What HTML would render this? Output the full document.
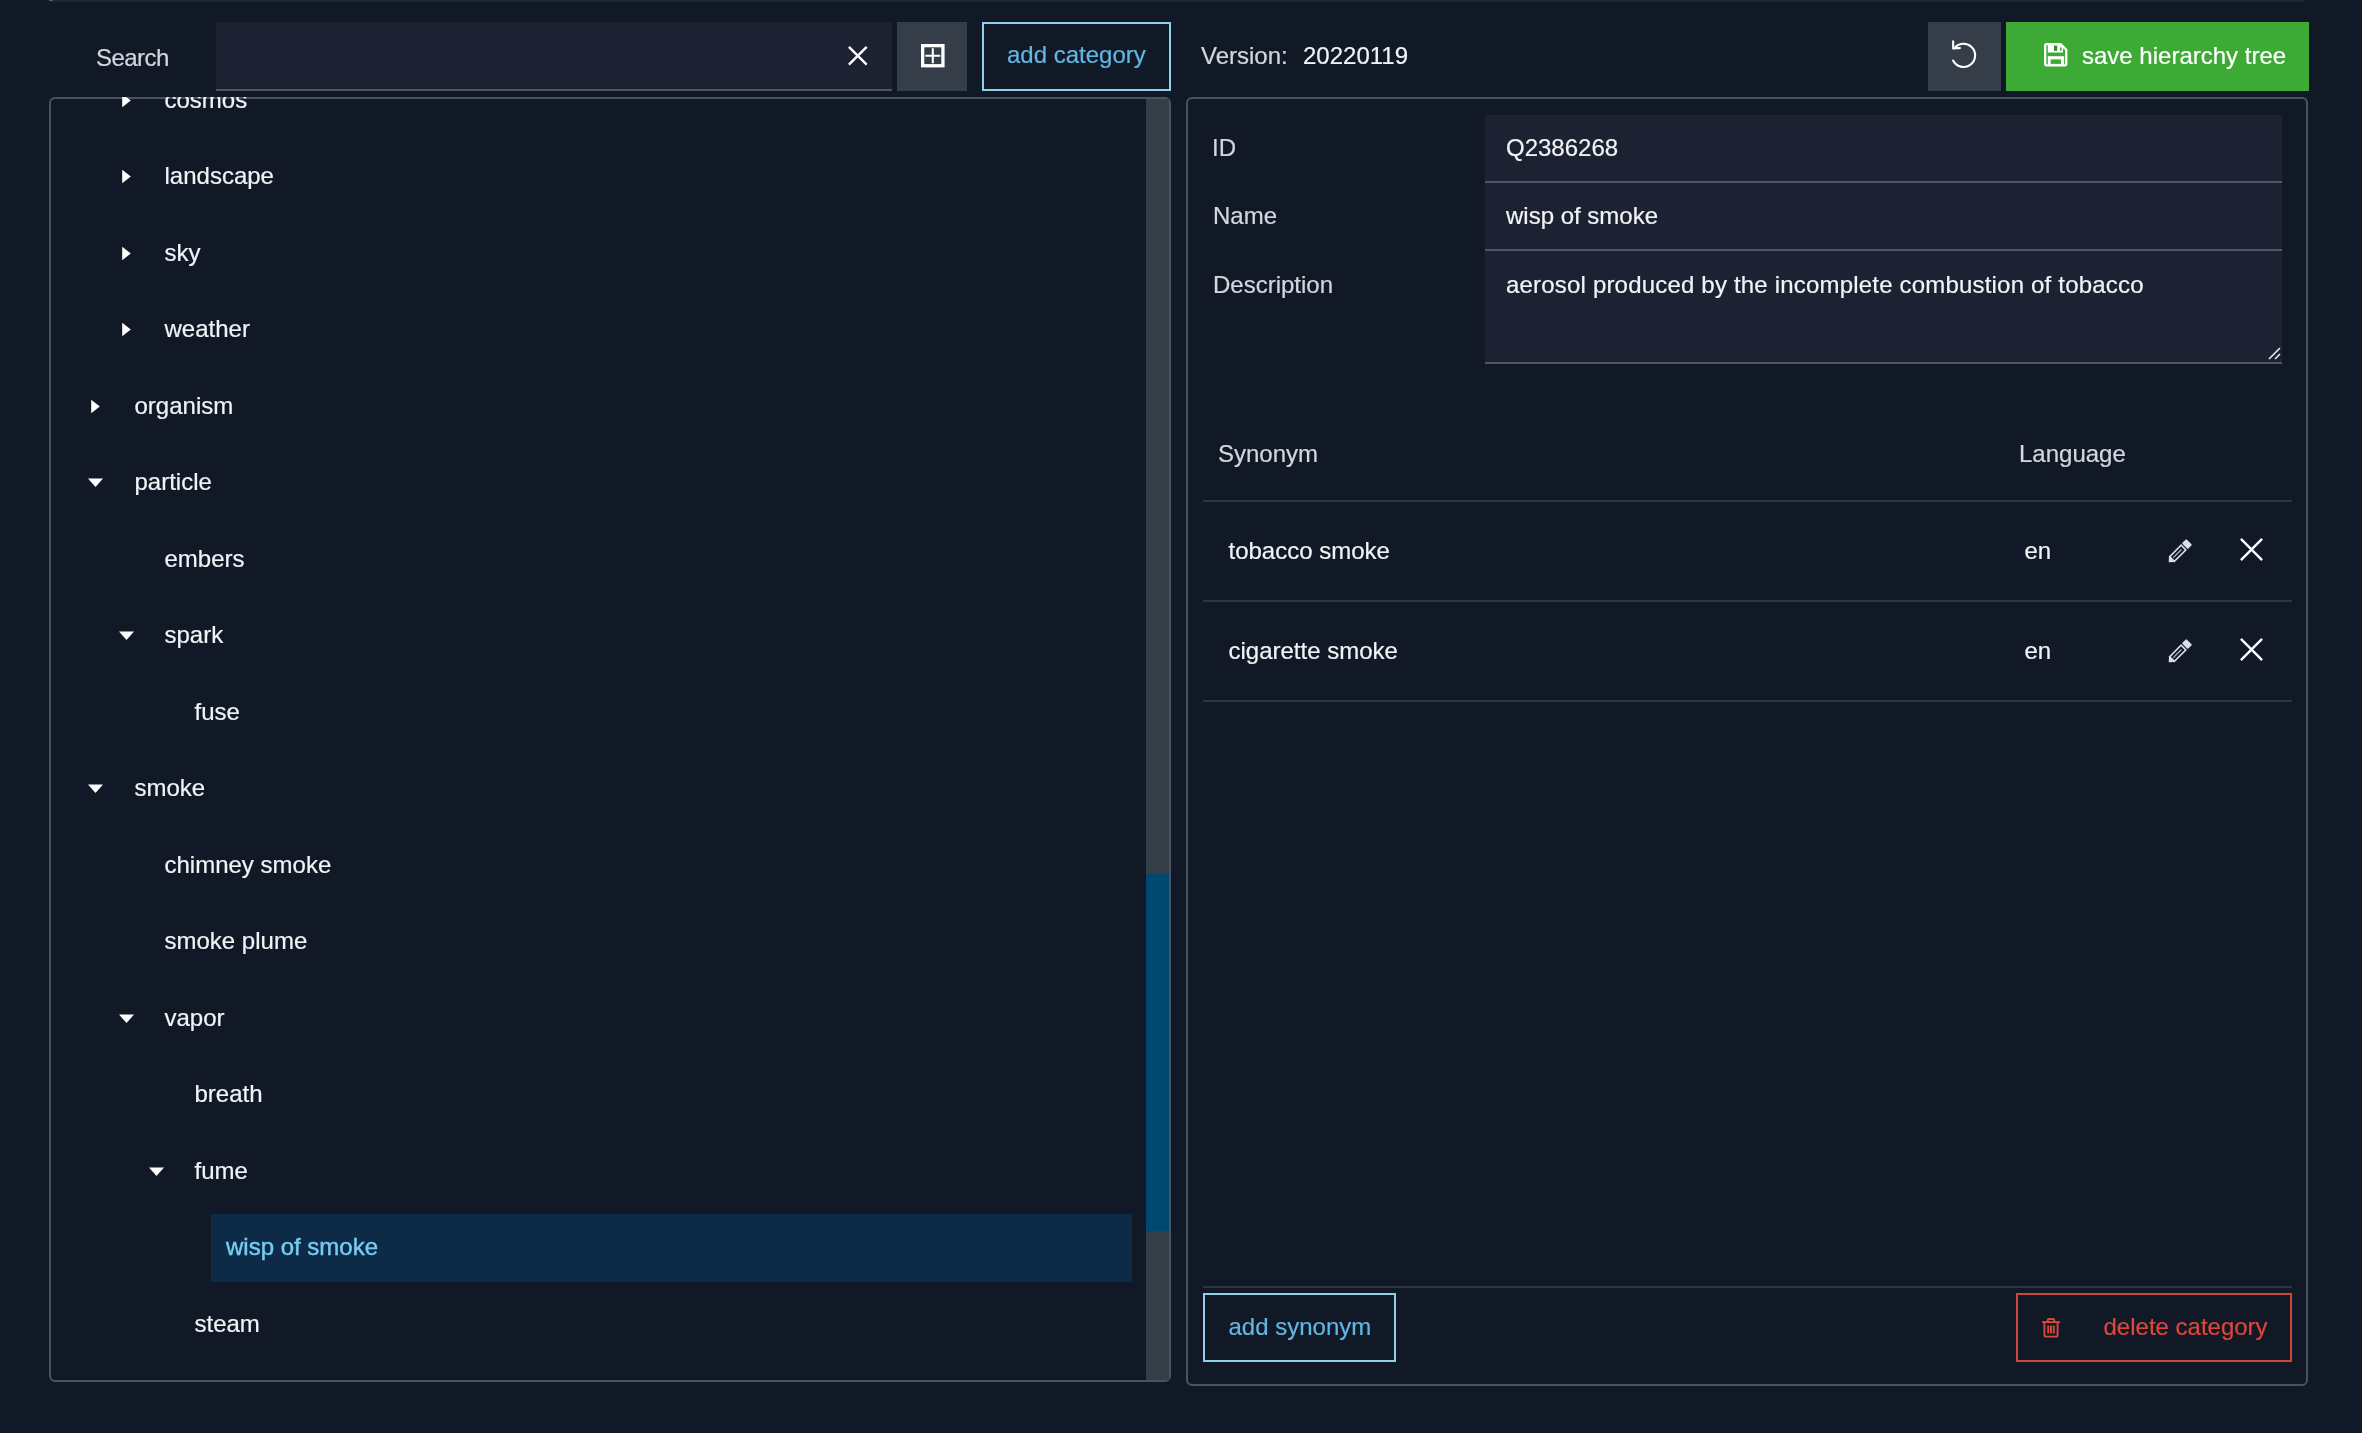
<!DOCTYPE html>
<html lang="en">
<head>
<meta charset="utf-8">
<title>Hierarchy tree editor</title>
<style>
html,body{margin:0;padding:0;}
html{background:#111826;}
body{will-change:transform;width:2362px;height:1433px;overflow:hidden;background:#111826;color:#f1f3f6;
 font-family:"Liberation Sans",sans-serif;font-size:24px;position:relative;}
.abs{position:absolute;}
.t{position:absolute;line-height:28px;font-size:24px;white-space:nowrap;-webkit-text-stroke:.2px currentColor;}
.dim{color:#d3d7de;}
.topline{left:50px;top:0;width:2254px;height:2px;background:#1c2331;}
.input{position:absolute;background:#1c2231;border-bottom:2px solid #4d5666;box-sizing:border-box;}
.btn{position:absolute;box-sizing:border-box;}
.btn.gray{background:#343d48;}
.btn.green{background:#3eaa36;}
.btn.blue{border:2px solid #90ceec;}
.btn.red{border:2px solid #d5443a;}
.cblue{color:#62b6e2;}
.cred{color:#dc473b;}
.panel{position:absolute;box-sizing:border-box;border:2px solid #4a5363;border-radius:6px;}
svg{position:absolute;overflow:visible;}
.hl{position:absolute;width:921px;height:68px;background:#0d2a47;}
.sel{color:#74cbf3;-webkit-text-stroke:.45px currentColor;}
.hr{position:absolute;height:2px;background:#2c3544;}
</style>
</head>
<body>
<div class="abs topline"></div>
<div class="abs" style="left:49px;top:0;width:4px;height:1px;background:#535b6b;"></div>
<!-- toolbar -->
<div class="t dim" style="left:96px;top:43.6px;letter-spacing:-.55px;">Search</div>
<div class="input" style="left:216px;top:22px;width:676px;height:69px;"></div>
<svg style="left:848px;top:46.2px;" width="19.6" height="19.6" viewBox="0 0 19.6 19.6"><path d="M0.9 0.9 L18.7 18.7 M18.7 0.9 L0.9 18.7" stroke="#fff" stroke-width="2.4" fill="none"/></svg>
<div class="btn gray" style="left:897px;top:22px;width:70px;height:69px;"></div>
<svg style="left:921px;top:44.2px;" width="23.6" height="23.4" viewBox="0 0 23.6 23.4"><rect x="1.65" y="1.65" width="20.3" height="20.1" fill="none" stroke="#fff" stroke-width="3.3"/><path d="M11.8 4.2 V19.2 M4.3 11.7 H19.3" stroke="#fff" stroke-width="2.1" fill="none"/></svg>
<div class="btn blue" style="left:982px;top:22px;width:189px;height:69px;"></div>
<div class="t cblue" style="left:1007px;top:41.4px;">add category</div>
<div class="t dim" style="left:1201px;top:41.6px;">Version:</div>
<div class="t" style="left:1303px;top:41.6px;">20220119</div>
<div class="btn gray" style="left:1928px;top:22px;width:73px;height:69px;"></div>
<svg style="left:1950px;top:38px;" width="30" height="32" viewBox="0 0 30 32"><path d="M4.14 10.55 A11.6 11.6 0 1 1 3.1 22.5" fill="none" stroke="#fff" stroke-width="2.1" stroke-linecap="round"/><path d="M3.15 3.3 V10.1 H9.9" fill="none" stroke="#fff" stroke-width="2.1" stroke-linecap="round" stroke-linejoin="miter"/></svg>
<div class="btn green" style="left:2006px;top:22px;width:303px;height:69px;"></div>
<svg style="left:2044px;top:42.5px;" width="23.4" height="23.5" viewBox="0 0 23.4 23.5"><path d="M1.15 2.7 Q1.15 1.15 2.7 1.15 H16.6 L22.25 6.8 V20.8 Q22.25 22.35 20.7 22.35 H2.7 Q1.15 22.35 1.15 20.8 Z" fill="none" stroke="#fff" stroke-width="2.3" stroke-linejoin="round"/><path d="M3.8 2 H16.6 L19 4.4 V9.6 H3.8 Z" fill="#fff"/><rect x="10" y="2.6" width="3.2" height="5.3" fill="#2f8f2c"/><rect x="16" y="4.4" width="1.6" height="3.4" fill="#3eaa36"/><rect x="3.8" y="13.2" width="16.3" height="8.6" fill="#fff"/><rect x="6.7" y="16.4" width="10.3" height="4.5" fill="#3eaa36"/></svg>
<div class="t" style="left:2082px;top:41.5px;color:#fff;">save hierarchy tree</div>
<!-- left panel -->
<div class="panel" id="lp" style="left:49px;top:97px;width:1122px;height:1285px;"></div>
<div class="abs" id="lpclip" style="left:49px;top:97px;width:1122px;height:1285px;overflow:hidden;border-radius:6px;">
<svg style="left:72.8px;top:-4.1px;" width="9" height="15" viewBox="0 0 9 15"><path d="M0.2 0.7 L8.8 7.5 L0.2 14.3 Z" fill="#fff"/></svg>
<div class="t" style="left:115.5px;top:-11.1px;">cosmos</div>
<svg style="left:72.8px;top:72.4px;" width="9" height="15" viewBox="0 0 9 15"><path d="M0.2 0.7 L8.8 7.5 L0.2 14.3 Z" fill="#fff"/></svg>
<div class="t" style="left:115.5px;top:65.4px;">landscape</div>
<svg style="left:72.8px;top:148.9px;" width="9" height="15" viewBox="0 0 9 15"><path d="M0.2 0.7 L8.8 7.5 L0.2 14.3 Z" fill="#fff"/></svg>
<div class="t" style="left:115.5px;top:141.9px;">sky</div>
<svg style="left:72.8px;top:225.4px;" width="9" height="15" viewBox="0 0 9 15"><path d="M0.2 0.7 L8.8 7.5 L0.2 14.3 Z" fill="#fff"/></svg>
<div class="t" style="left:115.5px;top:218.4px;">weather</div>
<svg style="left:42px;top:301.9px;" width="9" height="15" viewBox="0 0 9 15"><path d="M0.2 0.7 L8.8 7.5 L0.2 14.3 Z" fill="#fff"/></svg>
<div class="t" style="left:85.5px;top:294.9px;">organism</div>
<svg style="left:38px;top:381.4px;" width="17" height="9" viewBox="0 0 17 9"><path d="M1 0.6 L16 0.6 L8.5 8.9 Z" fill="#fff"/></svg>
<div class="t" style="left:85.5px;top:371.4px;">particle</div>
<div class="t" style="left:115.5px;top:447.9px;">embers</div>
<svg style="left:68.8px;top:534.4px;" width="17" height="9" viewBox="0 0 17 9"><path d="M1 0.6 L16 0.6 L8.5 8.9 Z" fill="#fff"/></svg>
<div class="t" style="left:115.5px;top:524.4px;">spark</div>
<div class="t" style="left:145.5px;top:600.9px;">fuse</div>
<svg style="left:38px;top:687.4px;" width="17" height="9" viewBox="0 0 17 9"><path d="M1 0.6 L16 0.6 L8.5 8.9 Z" fill="#fff"/></svg>
<div class="t" style="left:85.5px;top:677.4px;">smoke</div>
<div class="t" style="left:115.5px;top:753.9px;">chimney smoke</div>
<div class="t" style="left:115.5px;top:830.4px;">smoke plume</div>
<svg style="left:68.8px;top:916.9px;" width="17" height="9" viewBox="0 0 17 9"><path d="M1 0.6 L16 0.6 L8.5 8.9 Z" fill="#fff"/></svg>
<div class="t" style="left:115.5px;top:906.9px;">vapor</div>
<div class="t" style="left:145.5px;top:983.4px;">breath</div>
<svg style="left:99.1px;top:1069.9px;" width="17" height="9" viewBox="0 0 17 9"><path d="M1 0.6 L16 0.6 L8.5 8.9 Z" fill="#fff"/></svg>
<div class="t" style="left:145.5px;top:1059.9px;">fume</div>
<div class="hl" style="left:162px;top:1117px;"></div>
<div class="t sel" style="left:177px;top:1136.4px;">wisp of smoke</div>
<div class="t" style="left:145.5px;top:1212.9px;">steam</div>
<div class="abs" style="left:1097px;top:2px;width:23px;height:1281px;background:#343e46;"></div>
<div class="abs" style="left:1097px;top:776.5px;width:23px;height:357px;background:#00486f;"></div>
</div>
<!-- right panel -->
<div class="panel" id="rp" style="left:1186px;top:97px;width:1122px;height:1289px;"></div>
<div class="t dim" style="left:1212px;top:133.7px;">ID</div>
<div class="t dim" style="left:1213px;top:202.3px;">Name</div>
<div class="t dim" style="left:1213px;top:270.9px;">Description</div>
<div class="input" style="left:1485px;top:115px;width:797px;height:68px;"></div>
<div class="input" style="left:1485px;top:183px;width:797px;height:68px;"></div>
<div class="input" style="left:1485px;top:251px;width:797px;height:113px;"></div>
<div class="t" style="left:1506px;top:133.7px;">Q2386268</div>
<div class="t" style="left:1506px;top:202.3px;">wisp of smoke</div>
<div class="t" style="left:1506px;top:270.9px;letter-spacing:.19px;">aerosol produced by the incomplete combustion of tobacco</div>
<svg style="left:2267px;top:346px;" width="14" height="14" viewBox="0 0 14 14"><path d="M2 13 L13 2 M8 13 L13 8" stroke="#e8eaee" stroke-width="1.6" fill="none"/></svg>
<div class="t dim" style="left:1218px;top:440.2px;">Synonym</div>
<div class="t dim" style="left:2019px;top:440.2px;">Language</div>
<div class="hr" style="left:1203px;top:500px;width:1089px;"></div>
<div class="hr" style="left:1203px;top:599.5px;width:1089px;"></div>
<div class="hr" style="left:1203px;top:700px;width:1089px;"></div>
<div class="t" style="left:1228.5px;top:536.7px;">tobacco smoke</div>
<div class="t" style="left:2024.5px;top:536.7px;">en</div>
<svg style="left:2179.4px;top:551.9px;" width="1" height="1" viewBox="0 0 1 1"><g transform="rotate(45)"><rect x="-4.1" y="-14.4" width="8.2" height="6.2" rx="1" fill="#d9dee8"/><rect x="-3.3" y="-6.3" width="6.6" height="16.2" fill="none" stroke="#d9dee8" stroke-width="1.6"/><path d="M0 -3.5 V8" stroke="#aeb5c4" stroke-width="1.3" fill="none"/><path d="M-4.1 9.9 H4.1 L0 14.6 Z" fill="#d9dee8"/></g></svg>
<svg style="left:2240px;top:538px;" width="23" height="23" viewBox="0 0 23 23"><path d="M0.9 0.9 L22.1 22.1 M22.1 0.9 L0.9 22.1" stroke="#fff" stroke-width="2.4" fill="none"/></svg>
<div class="t" style="left:1228.5px;top:636.7px;">cigarette smoke</div>
<div class="t" style="left:2024.5px;top:636.7px;">en</div>
<svg style="left:2179.4px;top:651.9px;" width="1" height="1" viewBox="0 0 1 1"><g transform="rotate(45)"><rect x="-4.1" y="-14.4" width="8.2" height="6.2" rx="1" fill="#d9dee8"/><rect x="-3.3" y="-6.3" width="6.6" height="16.2" fill="none" stroke="#d9dee8" stroke-width="1.6"/><path d="M0 -3.5 V8" stroke="#aeb5c4" stroke-width="1.3" fill="none"/><path d="M-4.1 9.9 H4.1 L0 14.6 Z" fill="#d9dee8"/></g></svg>
<svg style="left:2240px;top:638px;" width="23" height="23" viewBox="0 0 23 23"><path d="M0.9 0.9 L22.1 22.1 M22.1 0.9 L0.9 22.1" stroke="#fff" stroke-width="2.4" fill="none"/></svg>
<div class="hr" style="left:1203px;top:1285.5px;width:1089px;"></div>
<div class="btn blue" style="left:1203px;top:1293px;width:193px;height:69px;"></div>
<div class="t cblue" style="left:1228.5px;top:1312.7px;">add synonym</div>
<div class="btn red" style="left:2016px;top:1293px;width:276px;height:69px;"></div>
<svg style="left:2041.5px;top:1317.5px;" width="18" height="20" viewBox="0 0 18 20"><g fill="none" stroke="#dc473b" stroke-width="1.9" stroke-linecap="butt" stroke-linejoin="round"><path d="M0 4.1 H18"/><path d="M5.8 4 V2 a1 1 0 0 1 1-1 H11.2 a1 1 0 0 1 1 1 V4"/><path d="M2.4 4.4 V17 a1.6 1.6 0 0 0 1.6 1.6 H14 a1.6 1.6 0 0 0 1.6-1.6 V4.4"/><path d="M6.2 7.6 V15.6 M9 7.6 V15.6 M11.8 7.6 V15.6"/></g></svg>
<div class="t cred" style="left:2103.5px;top:1313.3px;">delete category</div>
</body>
</html>
